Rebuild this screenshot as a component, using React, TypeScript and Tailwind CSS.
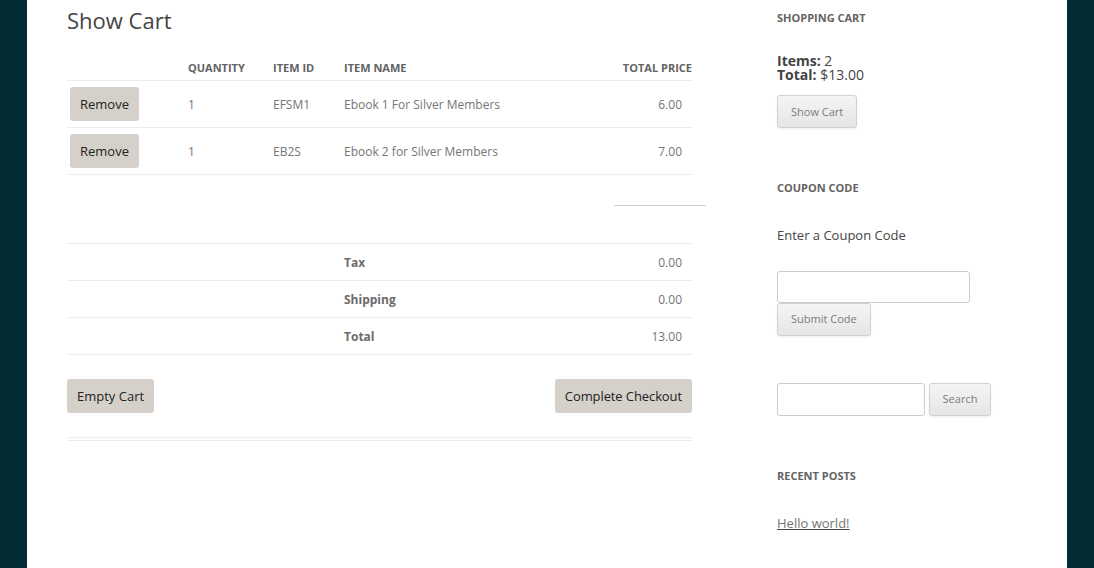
const font = { fontFamily: '"Open Sans", "Liberation Sans", sans-serif' };

const items = [
  { qty: "1", id: "EFSM1", name: "Ebook 1 For Silver Members", price: "6.00" },
  { qty: "1", id: "EB2S", name: "Ebook 2 for Silver Members", price: "7.00" },
];

const totals = [
  { label: "Tax", value: "0.00" },
  { label: "Shipping", value: "0.00" },
  { label: "Total", value: "13.00" },
];

const greyButton =
  "rounded-[3px] border border-[#d2d2d2] bg-gradient-to-b from-[#f4f4f4] to-[#e6e6e6] text-[11px] text-[#7c7c7c] shadow-[0_1px_2px_rgba(64,64,64,0.1)]";

function SidebarHeading({ children }: { children: string }) {
  return <h3 className="text-[11px] font-bold uppercase leading-[16px] text-[#636363]">{children}</h3>;
}

export default function App() {
  return (
    <div className="min-h-[568px] bg-[#022c34] px-[27px]" style={font}>
      <div className="flex min-h-[568px] bg-white pl-[40px]">
        <main className="w-[625px]">
          <h1 className="mt-[6px] text-[22px] font-normal leading-[28px] text-[#444]">Show Cart</h1>

          <div className="mt-[26px] grid grid-cols-[121px_85px_71px_1fr_auto] pb-[4px] text-[11px] font-bold uppercase leading-[16px] text-[#636363]">
            <div />
            <div>Quantity</div>
            <div>Item ID</div>
            <div>Item Name</div>
            <div className="text-right">Total Price</div>
          </div>

          {items.map((item) => (
            <div
              key={item.id}
              className="grid h-[47px] grid-cols-[121px_85px_71px_1fr_auto] items-center border-t border-[#ededed] text-[12px] text-[#757575]"
            >
              <div className="pl-[3px]">
                <button className="h-[34px] w-[69px] rounded-[3px] bg-[#d5d1ca] pt-px text-[13px] text-[#222]">Remove</button>
              </div>
              <div className="mt-[2px]">{item.qty}</div>
              <div className="mt-[2px]">{item.id}</div>
              <div className="mt-[2px]">{item.name}</div>
              <div className="mt-[2px] pr-[10px] text-right">{item.price}</div>
            </div>
          ))}

          <div className="border-t border-[#ededed]" />
          <div className="ml-[547px] mt-[30px] h-px w-[92px] bg-[#cccccc]" />

          <div className="mt-[37px]">
            {totals.map((row) => (
              <div
                key={row.label}
                className="grid h-[37px] grid-cols-[277px_1fr_auto] items-center border-t border-[#ededed] pt-[2px] text-[12px] text-[#757575]"
              >
                <div />
                <div className="font-bold text-[#6b6b6b]">{row.label}</div>
                <div className="pr-[10px] text-right">{row.value}</div>
              </div>
            ))}
            <div className="border-t border-[#ededed]" />
          </div>

          <div className="mt-[24px] flex justify-between">
            <button className="h-[34px] rounded-[3px] bg-[#d5d1ca] px-[10px] pt-[2px] text-[13px] text-[#222]">Empty Cart</button>
            <button className="h-[34px] rounded-[3px] bg-[#d5d1ca] px-[10px] pt-[2px] text-[13px] tracking-[-0.1px] text-[#222]">
              Complete Checkout
            </button>
          </div>

          <div className="mt-[24px] h-[4px] border-y border-[#ededed]" />
        </main>

        <aside className="ml-[85px] w-[250px]">
          <div className="mt-[10px]">
            <SidebarHeading>Shopping Cart</SidebarHeading>
          </div>
          <div className="mt-[28px] text-[14px] leading-[14px] text-[#444]">
            <div>
              <strong>Items:</strong> 2
            </div>
            <div>
              <strong>Total:</strong> $13.00
            </div>
          </div>
          <button className={`mt-[13px] h-[33px] px-[13px] pt-px ${greyButton}`}>Show Cart</button>

          <div className="mt-[52px]">
            <SidebarHeading>Coupon Code</SidebarHeading>
          </div>
          <p className="mt-[29px] text-[13px] leading-[20px] text-[#444]">Enter a Coupon Code</p>
          <input className="mt-[26px] block h-[32px] w-[193px] rounded-[3px] border border-[#cccccc] bg-white" />
          <button className={`block h-[33px] px-[13px] ${greyButton}`}>Submit Code</button>

          <div className="mt-[47px] flex gap-[4px]">
            <input className="h-[33px] w-[148px] rounded-[3px] border border-[#cccccc] bg-white" />
            <button className={`h-[33px] w-[62px] ${greyButton}`}>Search</button>
          </div>

          <div className="mt-[52px]">
            <SidebarHeading>Recent Posts</SidebarHeading>
          </div>
          <a href="#" className="mt-[29px] block text-[13px] leading-[20px] text-[#757575] underline decoration-[#444]">
            Hello world!
          </a>
        </aside>
      </div>
    </div>
  );
}
